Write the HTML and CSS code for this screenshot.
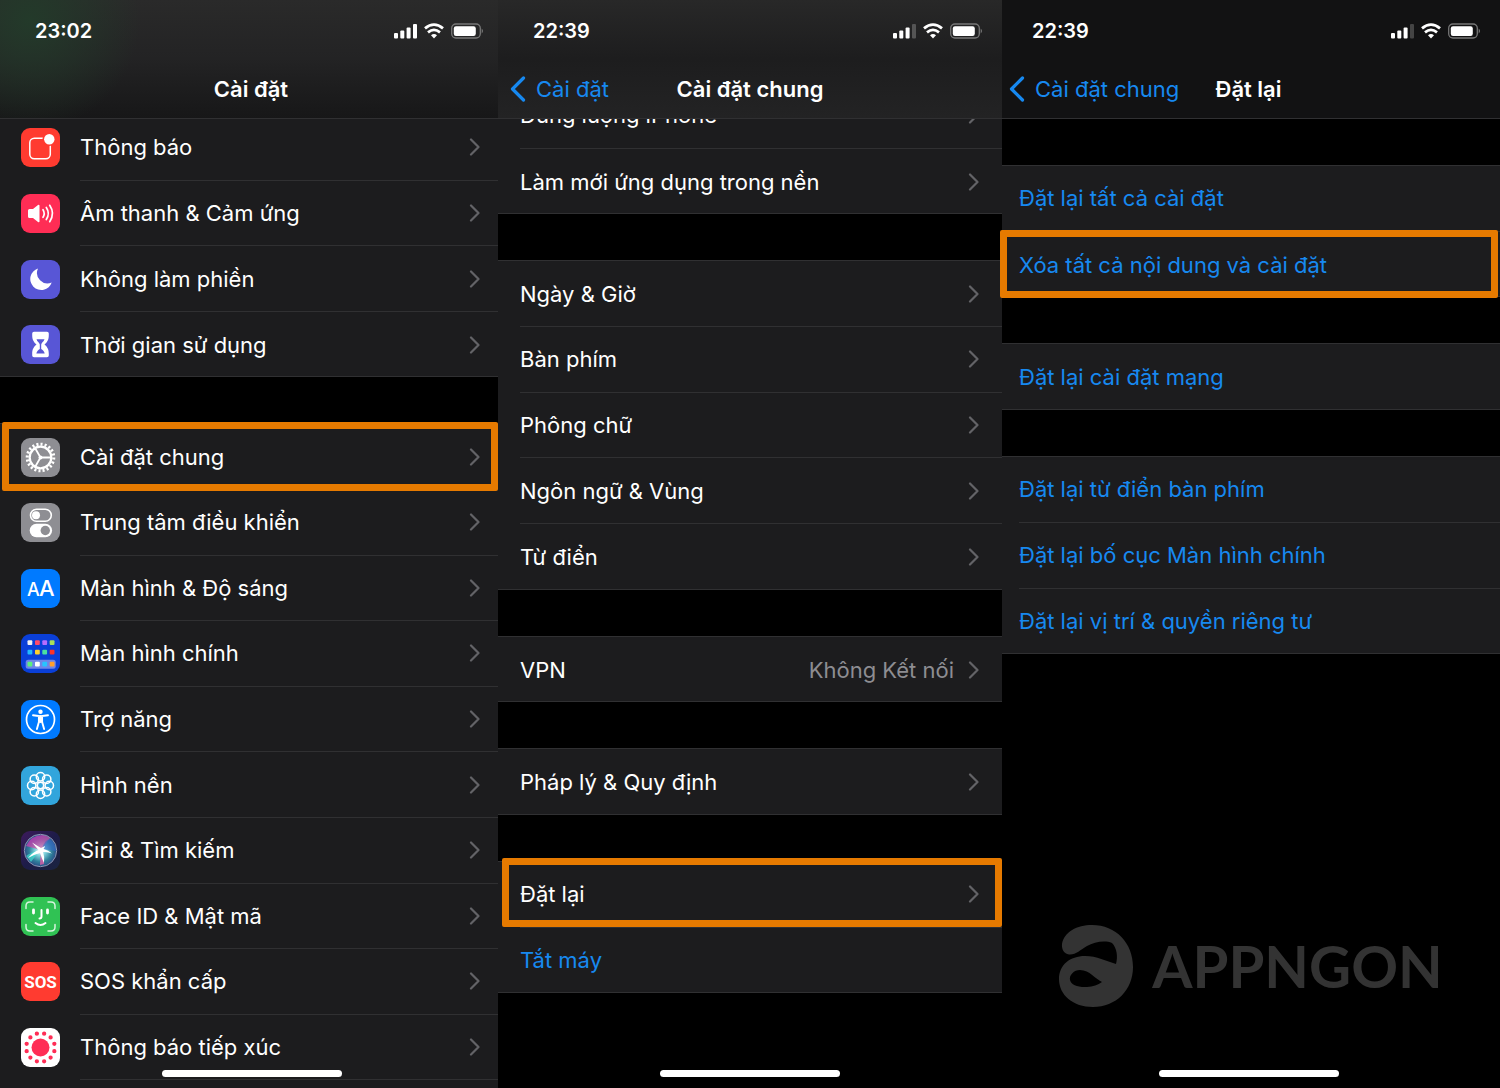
FILE: index.html
```html
<!DOCTYPE html>
<html lang="vi">
<head>
<meta charset="utf-8">
<meta name="viewport" content="width=device-width, initial-scale=1">
<title>Cài đặt</title>
<link rel="stylesheet" href="styles.css">
</head>
<body>
<svg class="defs" aria-hidden="true">
  <defs>
    <symbol id="chevron" viewBox="0 0 12 18"><path d="M2 1.500 9.500 9 2 16.500" fill="none" stroke="currentColor" stroke-width="2.200" stroke-linecap="round" stroke-linejoin="round"/></symbol>
    <symbol id="back" viewBox="0 0 16 26"><path d="M13.500 2 2.500 13l11 11" fill="none" stroke="currentColor" stroke-width="3.200" stroke-linecap="round" stroke-linejoin="round"/></symbol>
    <symbol id="wifi-battery" viewBox="0 0 90 18">
      <g fill="#fff">
        <rect x="0" y="11" width="4" height="5.500" rx="1"/><rect x="6.300" y="8.500" width="4" height="8" rx="1"/><rect x="12.600" y="5.500" width="4" height="11" rx="1"/>
        <path d="M40 16.500 37 13.300q3-2.400 6 0z"/>
      </g>
      <g fill="none" stroke="#fff" stroke-width="2.800">
        <path d="M34 10.300q6-4.800 12 0M31 6.400q9-7.600 18 0"/>
      </g>
      <rect x="57.700" y="2" width="28.600" height="14" rx="4.200" fill="none" stroke="#777" stroke-width="1.300"/>
      <rect x="59.800" y="4.200" width="22" height="9.800" rx="2.200" fill="#fff"/>
      <path d="M87.700 6.500q2.600 2.500 0 5z" fill="#777"/>
    </symbol>
    <radialGradient id="siri-bg" cx=".5" cy=".5" r=".55"><stop offset="0" stop-color="#fff"/><stop offset=".3" stop-color="#7fd3dc"/><stop offset=".65" stop-color="#2f7f9a"/><stop offset="1" stop-color="#2a3f80"/></radialGradient>
    <linearGradient id="siri-tile" x1="0" y1="0" x2="1" y2="1"><stop offset="0" stop-color="#3d1a5c"/><stop offset=".5" stop-color="#1d1c48"/><stop offset="1" stop-color="#1a2440"/></linearGradient>
    <linearGradient id="siri-pink" x1="0" y1="0" x2="1" y2="1"><stop offset="0" stop-color="#a02fb8"/><stop offset="1" stop-color="#f0609a" stop-opacity=".5"/></linearGradient>
  </defs>
</svg>

<main class="screens">
  <section class="screen screen-settings">
    <header class="top">
      <div class="status"><time>23:02</time>
        <svg class="signal" viewBox="0 0 90 18" role="img" aria-label="Sóng, Wi-Fi, pin"><use href="#wifi-battery"/><rect x="19" y="2" width="4" height="14.500" rx="1" fill="#fff"/></svg></div>
      <div class="bar"><h1>Cài đặt</h1></div>
    </header>
    <nav class="list">
      <a class="row" href="#"><svg class="icon red" viewBox="0 0 39 39"><rect x="8.800" y="10.300" width="20.500" height="20.500" rx="4.500" fill="none" stroke="#fff" stroke-width="1.500"/><circle cx="28.300" cy="11.200" r="6.800" fill="#ff3b30"/><circle cx="28.300" cy="11.200" r="5.200" fill="#fff"/></svg><span class="cell"><span>Thông báo</span><svg class="chev"><use href="#chevron"/></svg></span></a>
      <a class="row" href="#"><svg class="icon pink" viewBox="0 0 39 39"><path d="M7 16.500q0-1.500 1.500-1.500h3.500l5-4q1.500-1 1.500.8v15.400q0 1.800-1.500.8l-5-4H8.500Q7 24 7 22.500z" fill="#fff"/><path d="M22 15.700q2.400 3.800 0 7.600M25.300 13.500q4 6 0 12M28.700 11.300q5.600 8.200 0 16.400" fill="none" stroke="#fff" stroke-width="1.700" stroke-linecap="round"/></svg><span class="cell"><span>Âm thanh &amp; Cảm ứng</span><svg class="chev"><use href="#chevron"/></svg></span></a>
      <a class="row" href="#"><svg class="icon indigo" viewBox="0 0 39 39"><path d="M17 8.500A11 11 0 1 0 30.700 22.500 10.500 10.500 0 0 1 17 8.500z" fill="#fff"/></svg><span class="cell"><span>Không làm phiền</span><svg class="chev"><use href="#chevron"/></svg></span></a>
      <a class="row last" href="#"><svg class="icon indigo" viewBox="0 0 39 39"><path d="M13 6.700h13q1.800 0 1.800 1.800v1.500c0 4.500-1 6.500-4.300 9.500 3.300 3 4.300 5 4.300 9.500v1.500q0 1.800-1.800 1.800H13q-1.800 0-1.800-1.800V29c0-4.500 1-6.500 4.300-9.500-3.300-3-4.300-5-4.300-9.500V8.500q0-1.800 1.800-1.800z" fill="#fff"/><path d="M15.500 14.200h8c-.8 2.600-2.900 3.300-3.300 5.300v4.500c1.500.8 3 2.300 3.500 4.500h-8.400c.5-2.200 2-3.700 3.500-4.500v-4.500c-.4-2-2.500-2.700-3.300-5.300z" fill="#5856d6"/></svg><span class="cell"><span>Thời gian sử dụng</span><svg class="chev"><use href="#chevron"/></svg></span></a>
      <div class="gap"></div>
      <a class="row mark" href="#"><svg class="icon gray" viewBox="0 0 39 39"><g fill="none" stroke="#fff"><circle cx="19.500" cy="19.500" r="13.300" stroke-width="3" pathLength="40" stroke-dasharray="1 1"/><circle cx="19.500" cy="19.500" r="10.800" stroke-width="2.200"/><path d="M19.500 19.500H30M19.500 19.500l-5.300-9.200M19.500 19.500l-5.300 9.200" stroke-width="1.800"/></g><circle cx="19.500" cy="19.500" r="2" fill="#fff"/></svg><span class="cell"><span>Cài đặt chung</span><svg class="chev"><use href="#chevron"/></svg></span></a>
      <a class="row" href="#"><svg class="icon gray" viewBox="0 0 39 39"><rect x="9.500" y="6.300" width="20.800" height="12" rx="6" fill="none" stroke="#fff" stroke-width="1.600"/><circle cx="15" cy="12.300" r="4" fill="#fff"/><rect x="8.700" y="20.800" width="22.400" height="13.400" rx="6.700" fill="#fff"/><circle cx="24.300" cy="27.500" r="4.700" fill="#8e8e93"/></svg><span class="cell"><span>Trung tâm điều khiển</span><svg class="chev"><use href="#chevron"/></svg></span></a>
      <a class="row" href="#"><svg class="icon blue" viewBox="0 0 39 39"><text x="6" y="27" font-size="18">A</text><text x="18" y="27" font-size="22">A</text></svg><span class="cell"><span>Màn hình &amp; Độ sáng</span><svg class="chev"><use href="#chevron"/></svg></span></a>
      <a class="row" href="#"><svg class="icon royal" viewBox="0 0 39 39"><rect x="4.700" y="25.700" width="30" height="9" rx="2.500" fill="#6f86e8"/><g><rect x="6.500" y="6.300" width="4.800" height="4.800" rx="1" fill="#f2f2f5"/><rect x="14" y="6.300" width="4.800" height="4.800" rx="1" fill="#ff4a6b"/><rect x="21.300" y="6.300" width="4.800" height="4.800" rx="1" fill="#b66cff"/><rect x="28.700" y="6.300" width="4.800" height="4.800" rx="1" fill="#a8e05a"/><rect x="6.500" y="15.700" width="4.800" height="4.800" rx="1" fill="#22b8ff"/><rect x="14" y="15.700" width="4.800" height="4.800" rx="1" fill="#ffcf2d"/><rect x="21.300" y="15.700" width="4.800" height="4.800" rx="1" fill="#4be0a0"/><rect x="28.700" y="15.700" width="4.800" height="4.800" rx="1" fill="#ff3327"/><rect x="6.500" y="27.800" width="4.800" height="4.800" rx="1" fill="#5ef07a"/><rect x="14" y="27.800" width="4.800" height="4.800" rx="1" fill="#fff"/><rect x="21.300" y="27.800" width="4.800" height="4.800" rx="1" fill="#27c4ff"/><rect x="28.700" y="27.800" width="4.800" height="4.800" rx="1" fill="#ff9f2d"/></g></svg><span class="cell"><span>Màn hình chính</span><svg class="chev"><use href="#chevron"/></svg></span></a>
      <a class="row" href="#"><svg class="icon blue" viewBox="0 0 39 39"><circle cx="19.500" cy="19.500" r="14" fill="none" stroke="#fff" stroke-width="1.700"/><circle cx="19.500" cy="11.700" r="2.200" fill="#fff"/><path d="M12 15.300q7.500 1.600 15 0M19.500 16v6M17.900 17v5l-2 7M21.100 17v5l2 7" fill="none" stroke="#fff" stroke-width="1.900" stroke-linecap="round" stroke-linejoin="round"/></svg><span class="cell"><span>Trợ năng</span><svg class="chev"><use href="#chevron"/></svg></span></a>
      <a class="row" href="#"><svg class="icon sky" viewBox="0 0 39 39"><g fill="none" stroke="#fff" stroke-width="1.500"><circle cx="19.500" cy="10.700" r="4.200"/><circle cx="25.700" cy="13.300" r="4.200"/><circle cx="28.300" cy="19.500" r="4.200"/><circle cx="25.700" cy="25.700" r="4.200"/><circle cx="19.500" cy="28.300" r="4.200"/><circle cx="13.300" cy="25.700" r="4.200"/><circle cx="10.700" cy="19.500" r="4.200"/><circle cx="13.300" cy="13.300" r="4.200"/><circle cx="19.500" cy="19.500" r="3.200"/></g></svg><span class="cell"><span>Hình nền</span><svg class="chev"><use href="#chevron"/></svg></span></a>
      <a class="row" href="#"><svg class="icon" viewBox="0 0 39 39"><rect width="39" height="39" fill="url(#siri-tile)"/><circle cx="19.500" cy="19.500" r="16" fill="url(#siri-bg)"/><path d="M5 15Q10 4 22 4q5 1 7 3l-9 12z" fill="url(#siri-pink)"/><path d="M21 18Q24 8 29 8q6 5 6 12z" fill="#3568c8" opacity=".6"/><path d="M19 19Q10 21 5 25l5 6z" fill="#3fe0d0" opacity=".7"/><path d="M20 19q3 6 3 14l-4 1z" fill="#e05aa8" opacity=".8"/><path d="M7 27q5-6 10.500-8Q14 15 11 11.500q6 3.500 9 5.500l4-2q-.5 2-1.500 3 5 1 8.500 4.500-4.500-2-9-1.500 2 5 1 11-2.500-5-4-10-6 1.500-12 5z" fill="#fff"/><circle cx="19.500" cy="19.500" r="16.200" fill="none" stroke="#8d97b5" stroke-width="1"/></svg><span class="cell"><span>Siri &amp; Tìm kiếm</span><svg class="chev"><use href="#chevron"/></svg></span></a>
      <a class="row" href="#"><svg class="icon green" viewBox="0 0 39 39"><g fill="none" stroke="#fff" stroke-linecap="round"><path d="M5 11.500V9q0-4 4-4h3M27 5h3q4 0 4 4v2.500M34 27.500V30q0 4-4 4h-3M12 34H9q-4 0-4-4v-2.500" stroke-width="1.500" opacity=".8"/><path d="M12.500 13v3M26.500 13v3" stroke-width="2.800"/><path d="M20.500 13v6.500q0 2-2 2" stroke-width="2"/><path d="M14.500 26q5 4 10 0" stroke-width="2"/></g></svg><span class="cell"><span>Face ID &amp; Mật mã</span><svg class="chev"><use href="#chevron"/></svg></span></a>
      <a class="row" href="#"><svg class="icon red" viewBox="0 0 39 39"><text class="sos" x="19.500" y="26" text-anchor="middle">SOS</text></svg><span class="cell"><span>SOS khẩn cấp</span><svg class="chev"><use href="#chevron"/></svg></span></a>
      <a class="row" href="#"><svg class="icon white" viewBox="0 0 39 39"><circle cx="19.500" cy="19.500" r="9" fill="#ff2d55"/><circle cx="19.500" cy="19.500" r="14.300" fill="none" stroke="#ff2d55" stroke-width="4.300" stroke-linecap="round" pathLength="1200" stroke-dasharray="0 100" stroke-dashoffset="50"/></svg><span class="cell"><span>Thông báo tiếp xúc</span><svg class="chev"><use href="#chevron"/></svg></span></a>
      <div class="peek"></div>
    </nav>
    <div class="home"></div>
  </section>

  <section class="screen screen-general">
    <header class="top">
      <div class="status"><time>22:39</time>
        <svg class="signal" viewBox="0 0 90 18" role="img" aria-label="Sóng, Wi-Fi, pin"><use href="#wifi-battery"/><rect x="19" y="2" width="4" height="14.500" rx="1" fill="#555"/></svg></div>
      <div class="bar"><a class="back" href="#"><svg><use href="#back"/></svg>Cài đặt</a><h2>Cài đặt chung</h2></div>
    </header>
    <nav class="list">
      <a class="row" href="#"><span class="cell"><span>Dung lượng iPhone</span><svg class="chev"><use href="#chevron"/></svg></span></a>
      <a class="row last" href="#"><span class="cell"><span>Làm mới ứng dụng trong nền</span><svg class="chev"><use href="#chevron"/></svg></span></a>
      <div class="gap"></div>
      <a class="row" href="#"><span class="cell"><span>Ngày &amp; Giờ</span><svg class="chev"><use href="#chevron"/></svg></span></a>
      <a class="row" href="#"><span class="cell"><span>Bàn phím</span><svg class="chev"><use href="#chevron"/></svg></span></a>
      <a class="row" href="#"><span class="cell"><span>Phông chữ</span><svg class="chev"><use href="#chevron"/></svg></span></a>
      <a class="row" href="#"><span class="cell"><span>Ngôn ngữ &amp; Vùng</span><svg class="chev"><use href="#chevron"/></svg></span></a>
      <a class="row last" href="#"><span class="cell"><span>Từ điển</span><svg class="chev"><use href="#chevron"/></svg></span></a>
      <div class="gap"></div>
      <a class="row last" href="#"><span class="cell"><span>VPN</span><span class="value">Không Kết nối</span><svg class="chev"><use href="#chevron"/></svg></span></a>
      <div class="gap"></div>
      <a class="row last" href="#"><span class="cell"><span>Pháp lý &amp; Quy định</span><svg class="chev"><use href="#chevron"/></svg></span></a>
      <div class="gap"></div>
      <a class="row mark" href="#"><span class="cell"><span>Đặt lại</span><svg class="chev"><use href="#chevron"/></svg></span></a>
      <button class="row last" type="button"><span class="cell">Tắt máy</span></button>
      <div class="tail"></div>
    </nav>
    <div class="home"></div>
  </section>

  <section class="screen screen-reset">
    <header class="top">
      <div class="status"><time>22:39</time>
        <svg class="signal" viewBox="0 0 90 18" role="img" aria-label="Sóng, Wi-Fi, pin"><use href="#wifi-battery"/><rect x="19" y="2" width="4" height="14.500" rx="1" fill="#444"/></svg></div>
      <div class="bar"><a class="back" href="#"><svg><use href="#back"/></svg>Cài đặt chung</a><h2>Đặt lại</h2></div>
    </header>
    <div class="list">
      <div class="gap"></div>
      <button class="row" type="button"><span class="cell">Đặt lại tất cả cài đặt</span></button>
      <button class="row last mark" type="button"><span class="cell">Xóa tất cả nội dung và cài đặt</span></button>
      <div class="gap"></div>
      <button class="row last" type="button"><span class="cell">Đặt lại cài đặt mạng</span></button>
      <div class="gap"></div>
      <button class="row" type="button"><span class="cell">Đặt lại từ điển bàn phím</span></button>
      <button class="row" type="button"><span class="cell">Đặt lại bố cục Màn hình chính</span></button>
      <button class="row last" type="button"><span class="cell">Đặt lại vị trí &amp; quyền riêng tư</span></button>
      <div class="tail">
        <div class="brand">
          <svg viewBox="0 0 74 82" aria-hidden="true"><path fill="#333" fill-rule="evenodd" d="M33 0C57 0 74 18 74 42 74 65 57 82 34 82 14 82 0 70 0 54 0 40 11 31 26 31 38 31 47 36 57 39 59 32 58 23 53 18 46 15 35 17 28 21 21 25 17 30 10 29.500 5 29 2.500 24 3 19 5 7 18 0 33 0zM11 55C12 60 19 62.500 28 62 34 61.500 39 60 43 57 36 54 31 45 21 45 15 45 10 50 11 55z"/></svg>
          <span>APPNGON</span>
        </div>
      </div>
    </div>
    <div class="home"></div>
  </section>
</main>
</body>
</html>
```

FILE: styles.css
```css
* { box-sizing: border-box; }

body {
  margin: 0;
  background: #000;
  color: #fff;
  font-family: Inter, "Noto Sans", sans-serif;
  font-size: 22px;
  line-height: 28px;
}

a { color: inherit; text-decoration: none; }
h1, h2 { margin: 0; font-size: 22px; font-weight: 600; }
.defs { position: absolute; width: 0; height: 0; }

.screens {
  display: grid;
  grid-template-columns: 498fr 504fr 498fr;
  min-height: 100vh;
}

.screen {
  --start: 22px;
  --end: 22px;
  --line: #303032;
  position: relative;
  display: flex;
  flex-direction: column;
  min-width: 0;
  overflow: hidden;
}

/* Header: status line above the navigation bar */
.top {
  position: relative;
  z-index: 2;
  border-bottom: 1px solid #303032;
}
.status {
  display: flex;
  justify-content: space-between;
  align-items: center;
  height: 62px;
  padding: 0 19px 0 35px;
}
.status time { font-size: 20px; font-weight: 600; }
.signal { width: 90px; height: 18px; }
.bar {
  display: grid;
  grid-template-columns: 1fr auto 1fr;
  align-items: center;
  height: 56px;
  padding: 0 12px 2px;
}
.bar h1, .bar h2 { grid-column: 2; }
.back {
  display: flex;
  align-items: center;
  gap: 10px;
  color: #1789f0;
  white-space: nowrap;
}
.back svg { width: 16px; height: 26px; }

/* Rows and gaps share the height of the screen in fixed proportion */
.list {
  display: flex;
  flex: 1;
  flex-direction: column;
}
.row {
  position: relative;
  display: flex;
  flex: 70 0 0;
  align-items: center;
  gap: 20px;
  min-height: 44px;
  padding: 0 0 0 var(--start);
  border: 0;
  background: #1c1c1e;
  font: inherit;
  text-align: left;
}
button.row { color: #1789f0; }
.row.last { box-shadow: inset 0 -1px var(--line); }
.gap {
  flex: 50 0 0;
  min-height: 30px;
  box-shadow: inset 0 -1px var(--line);
}
.cell {
  display: flex;
  flex: 1;
  align-self: stretch;
  align-items: center;
  gap: 14px;
  padding-right: var(--end);
  border-bottom: 1px solid var(--line);
  white-space: nowrap;
}
.last .cell { border-bottom: 0; }
.value { margin-left: auto; color: #8d8d92; }
.chev {
  width: 12px;
  height: 18px;
  margin-left: auto;
  color: #636367;
}
.value + .chev { margin-left: 0; }

.mark { z-index: 1; }
.mark::after {
  content: "";
  position: absolute;
  inset: -2px 0 -1px 2px;
  border: 7px solid #e67a00;
  border-radius: 2px;
}

.icon {
  flex: none;
  width: 39px;
  height: 39px;
  border-radius: 9px;
}
.icon text { fill: #fff; font-family: Inter, sans-serif; font-weight: 500; }
.icon .sos { font-family: Roboto, sans-serif; font-size: 17px; font-weight: 700; }
.red { background: #ff3b30; }
.pink { background: #ff2d55; }
.indigo { background: #5856d6; }
.gray { background: #8e8e93; }
.blue { background: #007aff; }
.royal { background: #0a3fd8; }
.sky { background: #32a5dc; }
.green { background: #30c254; }
.white { background: #fff; }

.home {
  position: absolute;
  z-index: 2;
  bottom: 11px;
  left: 50%;
  width: 180px;
  height: 7px;
  margin-left: -90px;
  border-radius: 4px;
  background: #fff;
}

/* Settings */
.screen-settings { --start: 21px; --end: 17px; }
.screen-settings .top {
  background:
    radial-gradient(circle at 30px 20px, #233a2a 0, #233a2a00 110px),
    linear-gradient(#2a2a2a, #232324 50%, #171718);
}
.screen-settings .status { padding-right: 14px; }
.screen-settings .bar { padding-left: 16px; }
.screen-settings .list { margin-top: -4px; }
.screen-settings .home { margin-left: -87px; }
.peek { flex: 8 0 0; background: #1c1c1e; }

/* General: scrolled so the first row slides under the header */
.screen-general .top { background: linear-gradient(#282828, #1d1d1e 50%, #232324); }
.screen-general .list { margin-top: -36px; }
.screen-general .tail { flex: 101 0 0; }
.screen-general .mark::after { inset: -4px 0 1px 4px; }

/* Reset */
.screen-reset { --start: 17px; overflow: visible; }
.screen-reset .top { background: #121213; }
.screen-reset .status { padding-left: 30px; }
.screen-reset .bar { padding: 0 12px 2px 7px; }
.screen-reset .mark::after { inset: -2px 2px -1px -2px; }
.screen-reset .home { margin-left: -92px; }
.screen-reset .tail {
  display: flex;
  flex: 462 0 0;
  justify-content: center;
  align-items: flex-end;
}
.brand {
  display: flex;
  align-items: center;
  gap: 19px;
  margin-bottom: 81px;
  color: #333;
  font-family: Lato, sans-serif;
  font-size: 58px;
  font-weight: 700;
  line-height: 82px;
}
.brand svg { width: 74px; height: 82px; }
```
